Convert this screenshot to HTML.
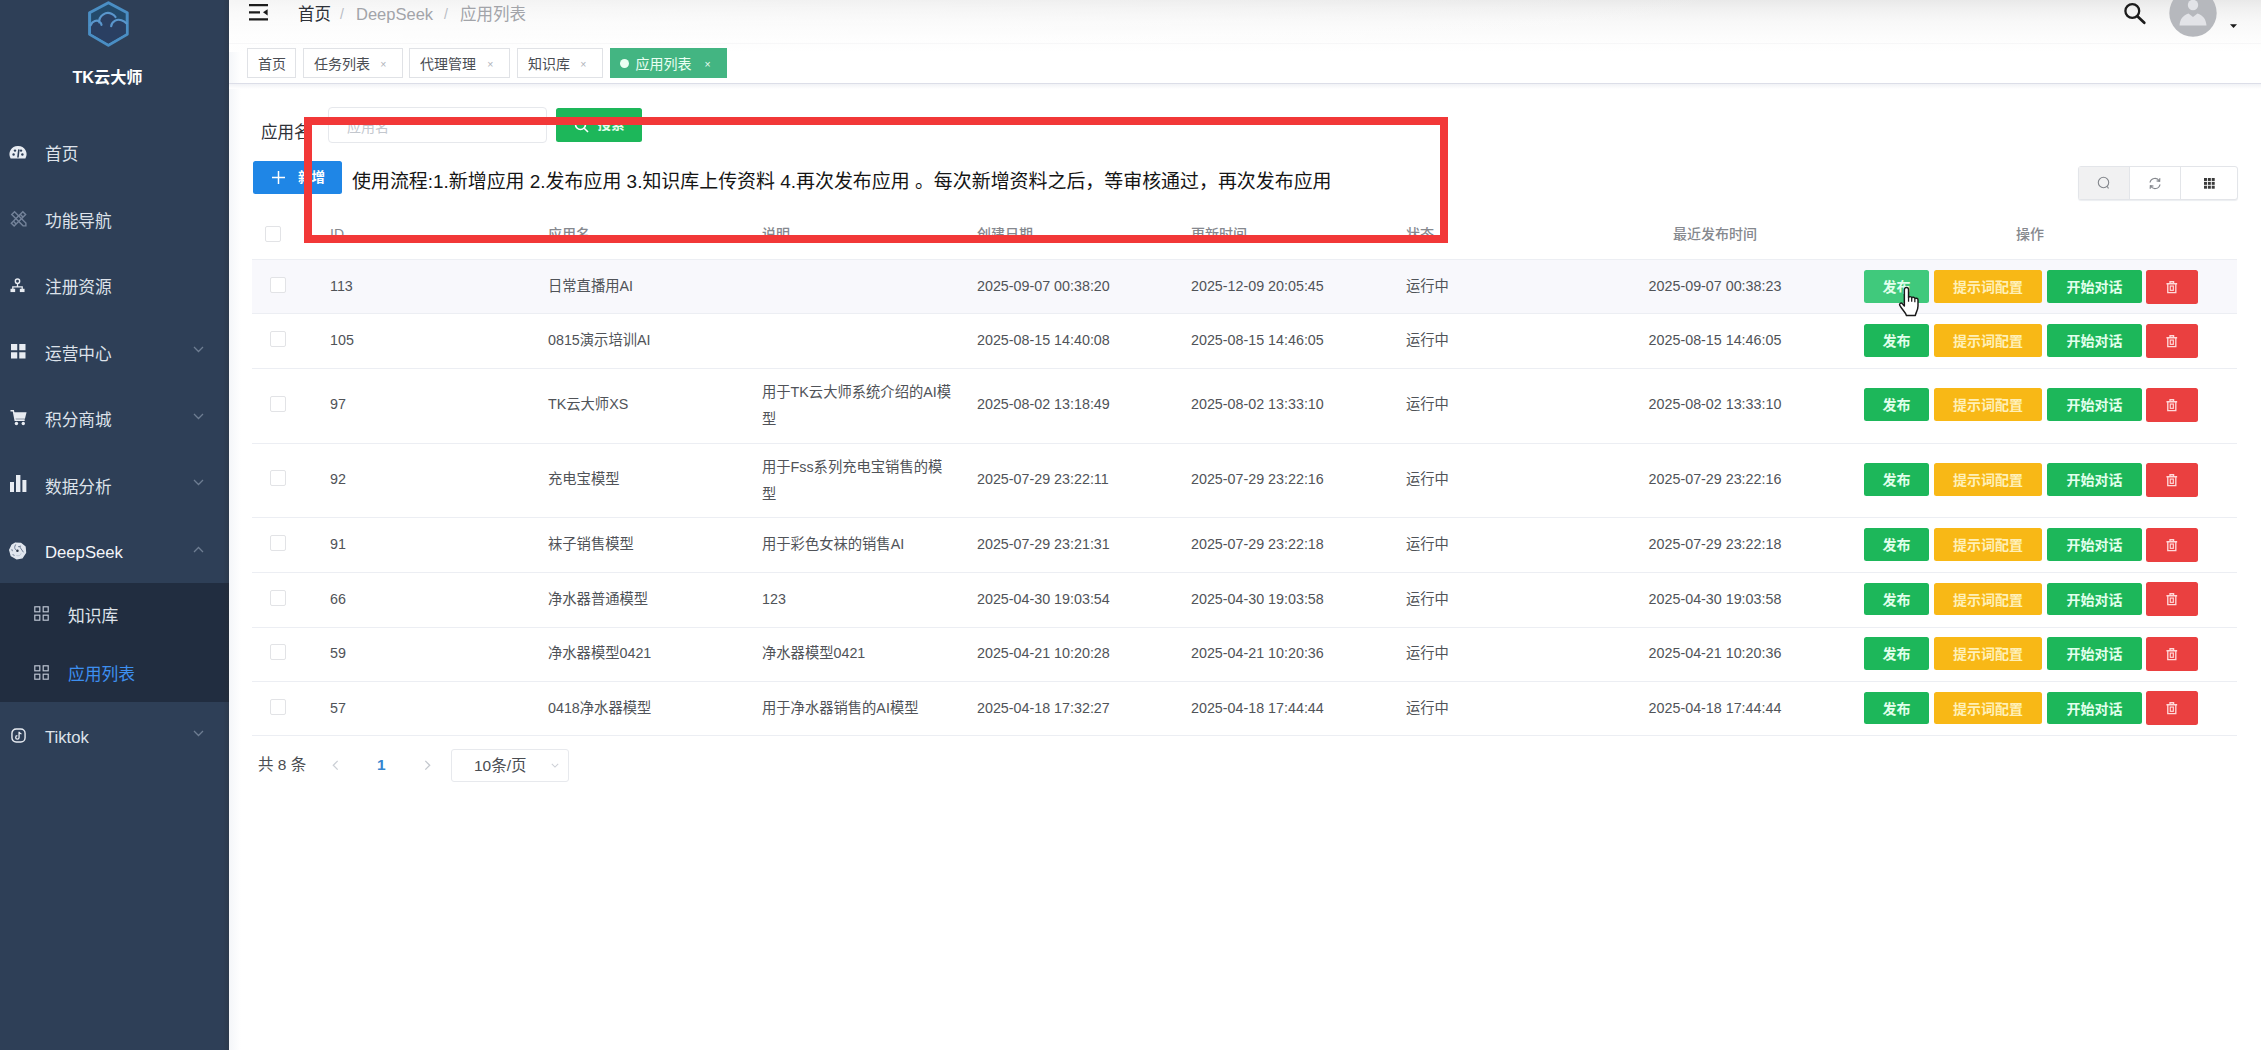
<!DOCTYPE html>
<html lang="zh-CN">
<head>
<meta charset="utf-8">
<title>应用列表 - TK云大师</title>
<style>
*{box-sizing:border-box;margin:0;padding:0}
html,body{width:2261px;height:1050px;overflow:hidden;background:#fff}
body{position:relative;font-family:"Liberation Sans","Noto Sans CJK SC",sans-serif;color:#404040;font-size:14.5px}
.t{position:absolute;white-space:nowrap;line-height:24px;height:24px}
#side{position:absolute;left:0;top:0;width:229px;height:1050px;background:#2e3f57}
#side .sub{position:absolute;left:0;top:583px;width:229px;height:119px;background:#212d40}
#side .mi{position:absolute;left:45px;color:#dde2ea;font-size:16.7px;line-height:24px;height:24px;white-space:nowrap}
#side .si{left:68px;font-size:16.8px}
#side svg{position:absolute;overflow:visible}
#edge{position:absolute;left:229px;top:0;width:12px;height:1050px;background:linear-gradient(to right,#f4f6f9,#fff)}
#nav{position:absolute;left:229px;top:0;width:2032px;height:52px;background:linear-gradient(to right,rgba(255,255,255,0.55) 0,rgba(255,255,255,0.35) 35%,rgba(255,255,255,0) 75%),linear-gradient(to bottom,#e9e9e9 0,#f1f1f1 9px,#f8f8f8 22px,#fcfcfc 36px,#fff 52px)}
#navline{position:absolute;left:229px;top:43px;width:2032px;height:1px;background:rgba(240,240,242,0.5)}
#tagsline{position:absolute;left:229px;top:82.5px;width:2032px;height:1.5px;background:#dcdee8}
#tagsshadow{position:absolute;left:229px;top:84px;width:2032px;height:5px;background:linear-gradient(to bottom,#f1f2f6,#fff)}
.bc{font-size:16.5px;top:1.8px}
.tag{position:absolute;top:48px;height:30px;border:1px solid #e0e2e6;background:#fff;color:#4a4d53;font-size:14px;line-height:28px;white-space:nowrap}
.tag span{position:absolute;top:0.8px}
.tag .x{color:#b0b4bb;font-size:10.5px}
.tag.on{background:#43b582;border-color:#43b582;color:#eafff2}
.btn{position:absolute;border-radius:2.5px;color:#fff;font-weight:bold;font-size:14px;text-align:center;white-space:nowrap}
.g{background:#1db75a;color:#e2ffec}
.y{background:#f8b816;color:#fff0b8}
.r{background:#ea4040}
.hl{position:absolute;left:252px;width:1985px;height:1px;background:#eceef3}
.th{position:absolute;top:222px;line-height:24px;color:#85888e;font-weight:500;font-size:14px;white-space:nowrap}
.td{position:absolute;line-height:24px;color:#505358;font-size:14.3px;white-space:nowrap}
.cb{position:absolute;left:269.7px;width:16px;height:16px;border:1px solid #e2e3e6;border-radius:2px;background:#fff}
svg{position:absolute;overflow:visible}
</style>
</head>
<body>
<div id="side">
<div class="sub"></div>
<div style="position:absolute;left:223px;top:0;width:6px;height:1050px;background:linear-gradient(to right,rgba(40,40,40,0),rgba(40,40,40,0.22))"></div>
<svg style="left:0;top:0" width="229" height="60" viewBox="0 0 229 60">
<polygon points="108.4,2.8 127.2,12.8 127.2,34.2 108.4,45.3 89.6,34.2 89.6,12.8" fill="#234a6b" stroke="#4a8ec4" stroke-width="3" stroke-linejoin="round"/>
<path d="M91,25 C93,20.5 97,19.5 99.5,21.5 C99.5,15.5 105,12.5 109,13 C112,13.4 114.5,15 115.6,17 L112,23 C115,20.5 120,19.5 125.8,23.5 L125.8,33.4 L108.4,43.6 L91,33.4 Z" fill="#2a3f62"/>
<path d="M90.6,25.3 C92.5,21 97,19.6 99.5,21.6 M99.3,22.4 C98.6,15.6 106,11.2 111.5,13.8 C113.5,14.8 114.8,15.8 115.5,17 M99.6,21.8 C100.6,22.6 101.4,23.6 101.5,24.8 M111.2,26.2 C111.5,21.5 117,18.6 121.5,20.3 C124,21.2 125.4,22.2 126.4,23.4" fill="none" stroke="#5a96cc" stroke-width="2.2" stroke-linecap="round"/>
</svg>
<div class="t" style="left:0;width:215px;text-align:center;top:64.5px;color:#fff;font-weight:bold;font-size:16.2px">TK云大师</div>
<div class="mi" style="top:143.4px">首页</div>
<div class="mi" style="top:209.9px">功能导航</div>
<div class="mi" style="top:276.3px">注册资源</div>
<div class="mi" style="top:342.8px">运营中心</div>
<svg style="left:193px;top:346.0px" width="11" height="7" viewBox="0 0 11 7"><path d="M1,1 L5.5,5.5 L10,1" fill="none" stroke="#6e7d92" stroke-width="1.3"/></svg>
<div class="mi" style="top:409.3px">积分商城</div>
<svg style="left:193px;top:412.5px" width="11" height="7" viewBox="0 0 11 7"><path d="M1,1 L5.5,5.5 L10,1" fill="none" stroke="#6e7d92" stroke-width="1.3"/></svg>
<div class="mi" style="top:475.7px">数据分析</div>
<svg style="left:193px;top:479.0px" width="11" height="7" viewBox="0 0 11 7"><path d="M1,1 L5.5,5.5 L10,1" fill="none" stroke="#6e7d92" stroke-width="1.3"/></svg>
<div class="mi" style="top:540.5px;color:#f3f5f9">DeepSeek</div>
<svg style="left:193px;top:546.0px" width="11" height="7" viewBox="0 0 11 7"><path d="M1,6 L5.5,1.5 L10,6" fill="none" stroke="#6e7d92" stroke-width="1.3"/></svg>
<div class="mi" style="top:725.5px">Tiktok</div>
<svg style="left:193px;top:730.2px" width="11" height="7" viewBox="0 0 11 7"><path d="M1,1 L5.5,5.5 L10,1" fill="none" stroke="#6e7d92" stroke-width="1.3"/></svg>
<div class="mi si" style="top:604.9px">知识库</div>
<div class="mi si" style="top:663.3px;color:#3d8ff0">应用列表</div>
<svg style="left:9px;top:145.3px" width="18" height="15" viewBox="0 0 18 15"><path d="M9,1 A8.3,8.3 0 0 0 1.6,13.5 L16.4,13.5 A8.3,8.3 0 0 0 9,1 Z" fill="#e8ecf2"/><circle cx="4.6" cy="9.5" r="1.2" fill="#2e3f57"/><circle cx="6" cy="5.6" r="1.2" fill="#2e3f57"/><circle cx="12" cy="5.6" r="1.2" fill="#2e3f57"/><circle cx="13.4" cy="9.5" r="1.2" fill="#2e3f57"/><path d="M9,12 L9.8,5" stroke="#2e3f57" stroke-width="1.6" stroke-linecap="round"/></svg>
<svg style="left:9.5px;top:210px" width="17.4" height="17.4" viewBox="0 0 16 16"><g fill="none" stroke="#74839a" stroke-width="1.3"><path d="M1.2,12.2 L11.8,1.6 L14.4,4.2 L3.8,14.8 Z"/><path d="M1.6,4.2 L4.2,1.6 L14.6,12 L14.6,14.6 L12,14.6 Z"/><path d="M3.2,10.4 L5.6,12.8 M9.4,4 L11.9,6.5"/></g></svg>
<svg style="left:10.3px;top:277.6px" width="15" height="15" viewBox="0 0 16 16"><circle cx="8" cy="3.4" r="2.3" fill="none" stroke="#e8ecf2" stroke-width="1.5"/><path d="M8,6 L8,9 M3,12 L3,9.5 L13,9.5 L13,12" fill="none" stroke="#e8ecf2" stroke-width="1.4"/><rect x="0.5" y="11.5" width="5" height="3.5" fill="#e8ecf2"/><rect x="10.5" y="11.5" width="5" height="3.5" fill="#e8ecf2"/></svg>
<svg style="left:10.5px;top:344.3px" width="14.7" height="14.7" viewBox="0 0 16 16"><rect x="0" y="0" width="6.8" height="6.8" fill="#e8ecf2"/><rect x="9" y="0" width="6.8" height="6.8" fill="#e8ecf2"/><rect x="0" y="9" width="6.8" height="6.8" fill="#e8ecf2"/><rect x="9" y="9" width="6.8" height="6.8" fill="#e8ecf2"/></svg>
<svg style="left:9.5px;top:408.6px" width="18" height="17.5" viewBox="0 0 19 18"><path d="M0.5,1.5 L3.5,1.5 L5.5,11.5 L15.5,11.5" fill="none" stroke="#e8ecf2" stroke-width="1.6"/><path d="M4,3.2 L17.5,3.2 L15.8,10 L5.4,10 Z" fill="#e8ecf2"/><circle cx="6.8" cy="15" r="1.8" fill="#e8ecf2"/><circle cx="14" cy="15" r="1.8" fill="#e8ecf2"/></svg>
<svg style="left:9.6px;top:475.4px" width="17" height="17" viewBox="0 0 17 17"><rect x="0" y="7" width="4" height="10" fill="#e8ecf2"/><rect x="6" y="0" width="4.4" height="17" fill="#e8ecf2"/><rect x="12.4" y="5" width="4" height="12" fill="#e8ecf2"/></svg>
<svg style="left:9.3px;top:541.6px" width="17.2" height="17.6" viewBox="0 0 20 20"><path d="M7.5,1 L13.5,1.3 L18.6,5.2 L19.2,12 L15.2,18.2 L8.8,19.2 L2.6,15.6 L0.8,9 L3.6,3.4 Z" fill="#e1e6ee" stroke="#e1e6ee" stroke-width="1.6" stroke-linejoin="round"/><g fill="none" stroke="#5b6a82" stroke-width="1" stroke-linecap="round"><path d="M7.6,3 C6,5.4 6.4,7.4 7.6,8.6"/><path d="M11,5.2 L13.6,4.6 M12.6,5.6 L16.6,11.4"/><path d="M3.4,8.6 L3.8,10 M4.6,14.6 L6,15.2"/><path d="M9,15.6 C11.4,16.4 13.4,15.4 14,13.4" stroke="#b9c2d0"/></g><circle cx="9.8" cy="10" r="1.5" fill="#2a3446"/></svg>
<svg style="left:34px;top:606.2px" width="15" height="15" viewBox="0 0 15 15"><g fill="none" stroke="#bcc4d1" stroke-width="1.2"><rect x="0.8" y="0.8" width="5" height="5"/><rect x="9.2" y="0.8" width="5" height="5"/><rect x="0.8" y="9.2" width="5" height="5"/><rect x="9.2" y="9.2" width="5" height="5"/></g></svg>
<svg style="left:34px;top:665.2px" width="15" height="15" viewBox="0 0 15 15"><g fill="none" stroke="#bcc4d1" stroke-width="1.2"><rect x="0.8" y="0.8" width="5" height="5"/><rect x="9.2" y="0.8" width="5" height="5"/><rect x="0.8" y="9.2" width="5" height="5"/><rect x="9.2" y="9.2" width="5" height="5"/></g></svg>
<svg style="left:10.6px;top:728px" width="15" height="15" viewBox="0 0 16 16"><rect x="1" y="1" width="14" height="14" rx="4.5" fill="none" stroke="#e8ecf2" stroke-width="1.5"/><path d="M8.6,4 L8.6,10 A1.8,1.8 0 1 1 6.8,8.2 M8.6,4.2 C9,5.6 10,6.2 11.2,6.3" fill="none" stroke="#e8ecf2" stroke-width="1.4"/></svg>
</div>
<div id="edge"></div><div id="nav"></div><div id="navline"></div><div id="tagsline"></div><div id="tagsshadow"></div>
<svg style="left:249px;top:4px" width="20" height="17" viewBox="0 0 20 17"><path d="M0,1.2 L19,1.2 M0,8.3 L11,8.3 M0,15.4 L19,15.4" stroke="#1c1c1c" stroke-width="2.3"/><path d="M18.6,5.2 L18.6,11.4 L14,8.3 Z" fill="#1c1c1c"/></svg>
<div class="t bc" style="left:298px;color:#2d3138">首页</div>
<div class="t bc" style="left:340px;color:#b8bcc4;font-size:14px">/</div>
<div class="t bc" style="left:356px;color:#a2a4a9">DeepSeek</div>
<div class="t bc" style="left:444px;color:#b8bcc4;font-size:14px">/</div>
<div class="t bc" style="left:460px;color:#a2a4a9">应用列表</div>
<div class="tag" style="left:247px;width:49px"><span style="left:10px">首页</span></div>
<div class="tag" style="left:303px;width:100px"><span style="left:10px">任务列表</span><span class="x" style="right:15.5px">×</span></div>
<div class="tag" style="left:409px;width:101px"><span style="left:10px">代理管理</span><span class="x" style="right:15.5px">×</span></div>
<div class="tag" style="left:517px;width:86px"><span style="left:10px">知识库</span><span class="x" style="right:15.5px">×</span></div>
<div class="tag on" style="left:609.5px;width:117.2px"><span style="left:9.5px;top:10px;width:9px;height:9px;border-radius:50%;background:#eafff2"></span><span style="left:25px">应用列表</span><span class="x" style="right:15px;color:#eafff2">×</span></div>
<svg style="left:2123px;top:2px" width="24" height="24" viewBox="0 0 24 24"><circle cx="9.3" cy="9" r="6.9" fill="none" stroke="#1c1c1c" stroke-width="2.3"/><path d="M14.4,14.2 L21.3,20.8" stroke="#1c1c1c" stroke-width="2.7" stroke-linecap="round"/></svg>
<svg style="left:2169px;top:-11px" width="48" height="48" viewBox="0 0 48 48"><circle cx="24" cy="24" r="23.7" fill="#b6b8bd"/><circle cx="24" cy="16" r="5.2" fill="#e2e3e7"/><path d="M10.5,36.5 C11,30 14,26.5 19.5,24.5 L24,28 L28.5,24.5 C34,26.5 37,30 37.5,36.5 Z" fill="#e2e3e7"/></svg>
<svg style="left:2230px;top:24.2px" width="7" height="4.2" viewBox="0 0 9 5"><path d="M0,0 L9,0 L4.5,5 Z" fill="#1a1a1a"/></svg>
<div class="t" style="left:261px;top:119.5px;font-size:16.5px;color:#2f3238">应用名</div>
<div style="position:absolute;left:328px;top:107px;width:219px;height:36px;border:1px solid #e6e8ec;border-radius:4px;background:#fff"></div>
<div class="t" style="left:347px;top:115px;font-size:14px;color:#c3c7ce">应用名</div>
<div class="btn g" style="left:556px;top:108px;width:86px;height:34px;line-height:34px;padding-left:24px;font-size:13.5px">搜索</div>
<svg style="left:574px;top:118px" width="15" height="15" viewBox="0 0 15 15"><circle cx="6.5" cy="6.5" r="5" fill="none" stroke="#fff" stroke-width="1.6"/><path d="M10.2,10.2 L14,14" stroke="#fff" stroke-width="1.6"/></svg>
<div class="btn" style="left:252.6px;top:160.6px;width:89.7px;height:33.6px;line-height:33.6px;background:#1f86e6;font-size:13.5px;padding-left:28px">新增</div>
<svg style="left:272px;top:171px" width="13" height="13" viewBox="0 0 13 13"><path d="M6.5,0 L6.5,13 M0,6.5 L13,6.5" stroke="#fff" stroke-width="1.5"/></svg>
<div class="t" style="left:352px;top:170.1px;font-size:18.95px;color:#151515">使用流程:1.新增应用 2.发布应用 3.知识库上传资料 4.再次发布应用 。每次新增资料之后，等审核通过，再次发布应用</div>
<div style="position:absolute;left:2078px;top:166px;width:160px;height:34px;border:1px solid #e3e5e9;border-radius:3px;background:#fff;box-shadow:0 1px 1px #eceef1"></div>
<div style="position:absolute;left:2079px;top:167px;width:50px;height:32px;background:#f1f1f2"></div>
<div style="position:absolute;left:2129px;top:167px;width:1px;height:32px;background:#e3e5e9"></div>
<div style="position:absolute;left:2180px;top:167px;width:1px;height:32px;background:#e3e5e9"></div>
<svg style="left:2097px;top:176px" width="14" height="14" viewBox="0 0 14 14"><circle cx="6.5" cy="6.5" r="5.2" fill="none" stroke="#83868c" stroke-width="1.1"/><path d="M10.2,10.4 L11.5,12.5" stroke="#83868c" stroke-width="1.1"/></svg>
<svg style="left:2148px;top:177px" width="14" height="13" viewBox="0 0 14 13"><path d="M2,5.5 A5,5 0 0 1 11.3,4 M12,7.5 A5,5 0 0 1 2.7,9" fill="none" stroke="#83868c" stroke-width="1.2"/><path d="M11.8,1.2 L11.6,4.4 L8.6,3.8 M2.2,11.8 L2.4,8.6 L5.4,9.2" fill="none" stroke="#83868c" stroke-width="1.2"/></svg>
<svg style="left:2203.8px;top:178.2px" width="10.8" height="10.8" viewBox="0 0 12 12"><g fill="#3a3a3a"><rect x="0" y="0" width="3.3" height="3.3"/><rect x="4.3" y="0" width="3.3" height="3.3"/><rect x="8.6" y="0" width="3.3" height="3.3"/><rect x="0" y="4.3" width="3.3" height="3.3"/><rect x="4.3" y="4.3" width="3.3" height="3.3"/><rect x="8.6" y="4.3" width="3.3" height="3.3"/><rect x="0" y="8.6" width="3.3" height="3.3"/><rect x="4.3" y="8.6" width="3.3" height="3.3"/><rect x="8.6" y="8.6" width="3.3" height="3.3"/></g></svg>
<div class="cb" style="left:264.6px;top:225.8px"></div>
<div class="th" style="left:330px">ID</div>
<div class="th" style="left:548px">应用名</div>
<div class="th" style="left:762px">说明</div>
<div class="th" style="left:977px">创建日期</div>
<div class="th" style="left:1191px">更新时间</div>
<div class="th" style="left:1406px">状态</div>
<div class="th" style="left:1615px;width:200px;text-align:center">最近发布时间</div>
<div class="th" style="left:1930px;width:200px;text-align:center">操作</div>
<div class="hl" style="top:259px"></div>
<div style="position:absolute;left:252px;top:260px;width:1985px;height:54px;background:#f8f8fc"></div>
<div class="hl" style="top:313.3px"></div>
<div class="cb" style="top:277.2px"></div>
<div class="td" style="left:330px;top:273.9px">113</div>
<div class="td" style="left:548px;top:273.9px">日常直播用AI</div>
<div class="td" style="left:977px;top:273.9px">2025-09-07 00:38:20</div>
<div class="td" style="left:1191px;top:273.9px">2025-12-09 20:05:45</div>
<div class="td" style="left:1406px;top:273.9px">运行中</div>
<div class="td" style="left:1615px;width:200px;text-align:center;top:273.9px">2025-09-07 00:38:23</div>
<div class="btn g" style="left:1863.6px;top:270.1px;width:65.8px;height:32.6px;line-height:35px;background:#40c97c">发布</div>
<div class="btn y" style="left:1933.8px;top:270.1px;width:108.3px;height:32.6px;line-height:35px">提示词配置</div>
<div class="btn g" style="left:2047.2px;top:270.1px;width:94.6px;height:32.6px;line-height:35px">开始对话</div>
<div class="btn r" style="left:2146px;top:269.5px;width:52px;height:34.2px"></div>
<svg style="left:2165.8px;top:280.5px" width="11.6" height="12.6" viewBox="0 0 13 14"><path d="M0.5,3 L12.5,3 M4.5,2.6 L4.5,0.8 L8.5,0.8 L8.5,2.6 M2,3 L2,13 L11,13 L11,3" fill="none" stroke="#ffd9d9" stroke-width="1.5"/><rect x="4.8" y="5.6" width="3.4" height="4.8" fill="none" stroke="#ffd9d9" stroke-width="1.3"/></svg>
<div class="hl" style="top:368.0px"></div>
<div class="cb" style="top:331.3px"></div>
<div class="td" style="left:330px;top:328.0px">105</div>
<div class="td" style="left:548px;top:328.0px">0815演示培训AI</div>
<div class="td" style="left:977px;top:328.0px">2025-08-15 14:40:08</div>
<div class="td" style="left:1191px;top:328.0px">2025-08-15 14:46:05</div>
<div class="td" style="left:1406px;top:328.0px">运行中</div>
<div class="td" style="left:1615px;width:200px;text-align:center;top:328.0px">2025-08-15 14:46:05</div>
<div class="btn g" style="left:1863.6px;top:324.2px;width:65.8px;height:32.6px;line-height:35px;">发布</div>
<div class="btn y" style="left:1933.8px;top:324.2px;width:108.3px;height:32.6px;line-height:35px">提示词配置</div>
<div class="btn g" style="left:2047.2px;top:324.2px;width:94.6px;height:32.6px;line-height:35px">开始对话</div>
<div class="btn r" style="left:2146px;top:323.6px;width:52px;height:34.2px"></div>
<svg style="left:2165.8px;top:334.6px" width="11.6" height="12.6" viewBox="0 0 13 14"><path d="M0.5,3 L12.5,3 M4.5,2.6 L4.5,0.8 L8.5,0.8 L8.5,2.6 M2,3 L2,13 L11,13 L11,3" fill="none" stroke="#ffd9d9" stroke-width="1.5"/><rect x="4.8" y="5.6" width="3.4" height="4.8" fill="none" stroke="#ffd9d9" stroke-width="1.3"/></svg>
<div class="hl" style="top:443.0px"></div>
<div class="cb" style="top:395.5px"></div>
<div class="td" style="left:330px;top:392.2px">97</div>
<div class="td" style="left:548px;top:392.2px">TK云大师XS</div>
<div class="td" style="left:762px;top:379.0px;width:192px;white-space:normal;line-height:26.9px">用于TK云大师系统介绍的AI模型</div>
<div class="td" style="left:977px;top:392.2px">2025-08-02 13:18:49</div>
<div class="td" style="left:1191px;top:392.2px">2025-08-02 13:33:10</div>
<div class="td" style="left:1406px;top:392.2px">运行中</div>
<div class="td" style="left:1615px;width:200px;text-align:center;top:392.2px">2025-08-02 13:33:10</div>
<div class="btn g" style="left:1863.6px;top:388.4px;width:65.8px;height:32.6px;line-height:35px;">发布</div>
<div class="btn y" style="left:1933.8px;top:388.4px;width:108.3px;height:32.6px;line-height:35px">提示词配置</div>
<div class="btn g" style="left:2047.2px;top:388.4px;width:94.6px;height:32.6px;line-height:35px">开始对话</div>
<div class="btn r" style="left:2146px;top:387.8px;width:52px;height:34.2px"></div>
<svg style="left:2165.8px;top:398.8px" width="11.6" height="12.6" viewBox="0 0 13 14"><path d="M0.5,3 L12.5,3 M4.5,2.6 L4.5,0.8 L8.5,0.8 L8.5,2.6 M2,3 L2,13 L11,13 L11,3" fill="none" stroke="#ffd9d9" stroke-width="1.5"/><rect x="4.8" y="5.6" width="3.4" height="4.8" fill="none" stroke="#ffd9d9" stroke-width="1.3"/></svg>
<div class="hl" style="top:517.0px"></div>
<div class="cb" style="top:470.3px"></div>
<div class="td" style="left:330px;top:467.0px">92</div>
<div class="td" style="left:548px;top:467.0px">充电宝模型</div>
<div class="td" style="left:762px;top:453.8px;width:192px;white-space:normal;line-height:26.9px">用于Fss系列充电宝销售的模型</div>
<div class="td" style="left:977px;top:467.0px">2025-07-29 23:22:11</div>
<div class="td" style="left:1191px;top:467.0px">2025-07-29 23:22:16</div>
<div class="td" style="left:1406px;top:467.0px">运行中</div>
<div class="td" style="left:1615px;width:200px;text-align:center;top:467.0px">2025-07-29 23:22:16</div>
<div class="btn g" style="left:1863.6px;top:463.2px;width:65.8px;height:32.6px;line-height:35px;">发布</div>
<div class="btn y" style="left:1933.8px;top:463.2px;width:108.3px;height:32.6px;line-height:35px">提示词配置</div>
<div class="btn g" style="left:2047.2px;top:463.2px;width:94.6px;height:32.6px;line-height:35px">开始对话</div>
<div class="btn r" style="left:2146px;top:462.6px;width:52px;height:34.2px"></div>
<svg style="left:2165.8px;top:473.6px" width="11.6" height="12.6" viewBox="0 0 13 14"><path d="M0.5,3 L12.5,3 M4.5,2.6 L4.5,0.8 L8.5,0.8 L8.5,2.6 M2,3 L2,13 L11,13 L11,3" fill="none" stroke="#ffd9d9" stroke-width="1.5"/><rect x="4.8" y="5.6" width="3.4" height="4.8" fill="none" stroke="#ffd9d9" stroke-width="1.3"/></svg>
<div class="hl" style="top:572.0px"></div>
<div class="cb" style="top:535.2px"></div>
<div class="td" style="left:330px;top:531.9px">91</div>
<div class="td" style="left:548px;top:531.9px">袜子销售模型</div>
<div class="td" style="left:762px;top:531.9px">用于彩色女袜的销售AI</div>
<div class="td" style="left:977px;top:531.9px">2025-07-29 23:21:31</div>
<div class="td" style="left:1191px;top:531.9px">2025-07-29 23:22:18</div>
<div class="td" style="left:1406px;top:531.9px">运行中</div>
<div class="td" style="left:1615px;width:200px;text-align:center;top:531.9px">2025-07-29 23:22:18</div>
<div class="btn g" style="left:1863.6px;top:528.1px;width:65.8px;height:32.6px;line-height:35px;">发布</div>
<div class="btn y" style="left:1933.8px;top:528.1px;width:108.3px;height:32.6px;line-height:35px">提示词配置</div>
<div class="btn g" style="left:2047.2px;top:528.1px;width:94.6px;height:32.6px;line-height:35px">开始对话</div>
<div class="btn r" style="left:2146px;top:527.5px;width:52px;height:34.2px"></div>
<svg style="left:2165.8px;top:538.5px" width="11.6" height="12.6" viewBox="0 0 13 14"><path d="M0.5,3 L12.5,3 M4.5,2.6 L4.5,0.8 L8.5,0.8 L8.5,2.6 M2,3 L2,13 L11,13 L11,3" fill="none" stroke="#ffd9d9" stroke-width="1.5"/><rect x="4.8" y="5.6" width="3.4" height="4.8" fill="none" stroke="#ffd9d9" stroke-width="1.3"/></svg>
<div class="hl" style="top:627.0px"></div>
<div class="cb" style="top:589.8px"></div>
<div class="td" style="left:330px;top:586.5px">66</div>
<div class="td" style="left:548px;top:586.5px">净水器普通模型</div>
<div class="td" style="left:762px;top:586.5px">123</div>
<div class="td" style="left:977px;top:586.5px">2025-04-30 19:03:54</div>
<div class="td" style="left:1191px;top:586.5px">2025-04-30 19:03:58</div>
<div class="td" style="left:1406px;top:586.5px">运行中</div>
<div class="td" style="left:1615px;width:200px;text-align:center;top:586.5px">2025-04-30 19:03:58</div>
<div class="btn g" style="left:1863.6px;top:582.7px;width:65.8px;height:32.6px;line-height:35px;">发布</div>
<div class="btn y" style="left:1933.8px;top:582.7px;width:108.3px;height:32.6px;line-height:35px">提示词配置</div>
<div class="btn g" style="left:2047.2px;top:582.7px;width:94.6px;height:32.6px;line-height:35px">开始对话</div>
<div class="btn r" style="left:2146px;top:582.1px;width:52px;height:34.2px"></div>
<svg style="left:2165.8px;top:593.1px" width="11.6" height="12.6" viewBox="0 0 13 14"><path d="M0.5,3 L12.5,3 M4.5,2.6 L4.5,0.8 L8.5,0.8 L8.5,2.6 M2,3 L2,13 L11,13 L11,3" fill="none" stroke="#ffd9d9" stroke-width="1.5"/><rect x="4.8" y="5.6" width="3.4" height="4.8" fill="none" stroke="#ffd9d9" stroke-width="1.3"/></svg>
<div class="hl" style="top:681.0px"></div>
<div class="cb" style="top:644.3px"></div>
<div class="td" style="left:330px;top:641.0px">59</div>
<div class="td" style="left:548px;top:641.0px">净水器模型0421</div>
<div class="td" style="left:762px;top:641.0px">净水器模型0421</div>
<div class="td" style="left:977px;top:641.0px">2025-04-21 10:20:28</div>
<div class="td" style="left:1191px;top:641.0px">2025-04-21 10:20:36</div>
<div class="td" style="left:1406px;top:641.0px">运行中</div>
<div class="td" style="left:1615px;width:200px;text-align:center;top:641.0px">2025-04-21 10:20:36</div>
<div class="btn g" style="left:1863.6px;top:637.2px;width:65.8px;height:32.6px;line-height:35px;">发布</div>
<div class="btn y" style="left:1933.8px;top:637.2px;width:108.3px;height:32.6px;line-height:35px">提示词配置</div>
<div class="btn g" style="left:2047.2px;top:637.2px;width:94.6px;height:32.6px;line-height:35px">开始对话</div>
<div class="btn r" style="left:2146px;top:636.6px;width:52px;height:34.2px"></div>
<svg style="left:2165.8px;top:647.6px" width="11.6" height="12.6" viewBox="0 0 13 14"><path d="M0.5,3 L12.5,3 M4.5,2.6 L4.5,0.8 L8.5,0.8 L8.5,2.6 M2,3 L2,13 L11,13 L11,3" fill="none" stroke="#ffd9d9" stroke-width="1.5"/><rect x="4.8" y="5.6" width="3.4" height="4.8" fill="none" stroke="#ffd9d9" stroke-width="1.3"/></svg>
<div class="hl" style="top:735.0px"></div>
<div class="cb" style="top:698.8px"></div>
<div class="td" style="left:330px;top:695.5px">57</div>
<div class="td" style="left:548px;top:695.5px">0418净水器模型</div>
<div class="td" style="left:762px;top:695.5px">用于净水器销售的AI模型</div>
<div class="td" style="left:977px;top:695.5px">2025-04-18 17:32:27</div>
<div class="td" style="left:1191px;top:695.5px">2025-04-18 17:44:44</div>
<div class="td" style="left:1406px;top:695.5px">运行中</div>
<div class="td" style="left:1615px;width:200px;text-align:center;top:695.5px">2025-04-18 17:44:44</div>
<div class="btn g" style="left:1863.6px;top:691.7px;width:65.8px;height:32.6px;line-height:35px;">发布</div>
<div class="btn y" style="left:1933.8px;top:691.7px;width:108.3px;height:32.6px;line-height:35px">提示词配置</div>
<div class="btn g" style="left:2047.2px;top:691.7px;width:94.6px;height:32.6px;line-height:35px">开始对话</div>
<div class="btn r" style="left:2146px;top:691.1px;width:52px;height:34.2px"></div>
<svg style="left:2165.8px;top:702.1px" width="11.6" height="12.6" viewBox="0 0 13 14"><path d="M0.5,3 L12.5,3 M4.5,2.6 L4.5,0.8 L8.5,0.8 L8.5,2.6 M2,3 L2,13 L11,13 L11,3" fill="none" stroke="#ffd9d9" stroke-width="1.5"/><rect x="4.8" y="5.6" width="3.4" height="4.8" fill="none" stroke="#ffd9d9" stroke-width="1.3"/></svg>
<div class="t" style="left:258px;top:752.8px;font-size:15.5px;color:#4a4d52">共 8 条</div>
<svg style="left:332px;top:759.5px" width="7" height="10.5" viewBox="0 0 8 12"><path d="M6.5,1 L1.5,6 L6.5,11" fill="none" stroke="#ccd0d6" stroke-width="1.5"/></svg>
<div class="t" style="left:377px;top:752.8px;font-size:15.5px;color:#3585cf;font-weight:bold">1</div>
<svg style="left:424px;top:759.5px" width="7" height="10.5" viewBox="0 0 8 12"><path d="M1.5,1 L6.5,6 L1.5,11" fill="none" stroke="#c4c8ce" stroke-width="1.5"/></svg>
<div style="position:absolute;left:451px;top:748.5px;width:118px;height:33.5px;border:1px solid #e7e9ed;border-radius:3px;background:#fff"></div>
<div class="t" style="left:474px;top:753.6px;font-size:15.5px;color:#4a4d52">10条/页</div>
<svg style="left:551px;top:763px" width="8" height="5" viewBox="0 0 10 6"><path d="M1,1 L5,5 L9,1" fill="none" stroke="#cdd0d6" stroke-width="1.3"/></svg>
<div style="position:absolute;left:304px;top:117px;width:1144px;height:126px;border:8px solid #f23838"></div>
<svg style="left:1897px;top:286px" width="25.2" height="31.5" viewBox="0 0 24 30"><path d="M9,1.5 C10.4,1.5 11,2.5 11,3.6 L11,11 C11.3,9.8 13.8,9.8 14,11.2 C14.6,10.2 17,10.5 17,12 C17.8,11.2 20,11.6 20,13.2 L20,19 C20,23 18,25 17.5,28 L9,28 C8,25 4,21.5 2.6,18.4 C1.8,16.6 4,15.6 5.2,17 L7,19 L7,3.6 C7,2.5 7.6,1.5 9,1.5 Z" fill="#fff" stroke="#1a1a1a" stroke-width="1.4" stroke-linejoin="round"/><path d="M11,11 L11,15 M14,11.5 L14,15 M17,12.3 L17,15.5" stroke="#1a1a1a" stroke-width="1.2"/></svg>
</body>
</html>
